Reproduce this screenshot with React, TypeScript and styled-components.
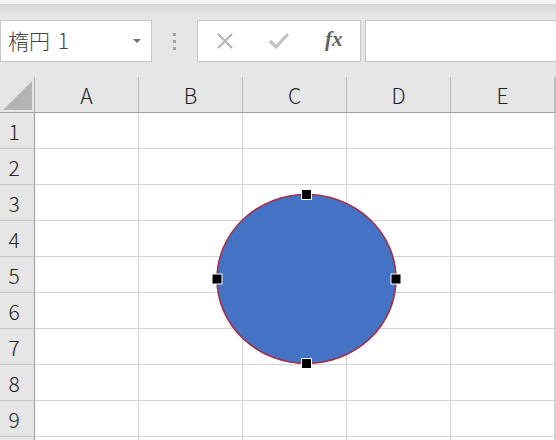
import React from "react";
import styled, { createGlobalStyle } from "styled-components";

const GlobalStyle = createGlobalStyle`
  html, body {
    margin: 0;
    padding: 0;
    background: #e6e6e6;
    overflow: hidden;
  }
  body {
    font-family: "Noto Sans CJK JP", "Noto Sans", sans-serif;
  }
`;

const columns = ["A", "B", "C", "D", "E"];
const rows = [1, 2, 3, 4, 5, 6, 7, 8, 9];

const Page = styled.div`
  width: 556px;
  height: 440px;
  overflow: hidden;
  background: #e6e6e6;
`;

const TopStrip = styled.div`
  height: 4px;
  background: #f3f2f1;
`;

const Shade = styled.div`
  height: 16px;
  background: linear-gradient(#d6d6d6, #e6e6e6 70%);
`;

const FormulaBar = styled.div`
  display: flex;
  align-items: stretch;
  height: 42px;
`;

const NameBox = styled.div`
  box-sizing: border-box;
  width: 152px;
  display: flex;
  align-items: center;
  justify-content: space-between;
  padding: 0 10px 2px 7px;
  background: #fff;
  border: 1px solid #c6c6c6;
  font-size: 21px;
  font-weight: 300;
  color: #444;
  word-spacing: 3px;
`;

const Caret = styled.span`
  width: 0;
  height: 0;
  border-left: 4px solid transparent;
  border-right: 4px solid transparent;
  border-top: 4px solid #707070;
  margin-top: 2px;
`;

const Dots = styled.div`
  width: 45px;
  display: flex;
  flex-direction: column;
  align-items: center;
  justify-content: center;
  gap: 4px;
  span {
    width: 3px;
    height: 3px;
    background: #a3a3a3;
  }
`;

const ButtonBox = styled.div`
  box-sizing: border-box;
  width: 164px;
  display: flex;
  align-items: center;
  padding-left: 17px;
  gap: 33px;
  background: #fff;
  border: 1px solid #c6c6c6;
`;

const Fx = styled.span`
  font-family: "Liberation Serif", "DejaVu Serif", serif;
  font-style: italic;
  font-weight: bold;
  font-size: 21px;
  color: #606060;
  margin-left: 2px;
  margin-top: -4px;
`;

const InputBox = styled.div`
  flex: 1;
  margin-left: 4px;
  background: #fff;
  border: 1px solid #c6c6c6;
  border-right: none;
`;

const Gap = styled.div`
  height: 15px;
`;

const Sheet = styled.div`
  position: relative;
  display: grid;
  grid-template-columns: 35px repeat(5, 104px) 1fr;
  grid-auto-rows: 36px;
`;

const Corner = styled.div`
  box-sizing: border-box;
  background: #e6e6e6;
  border-right: 1px solid #ababab;
  border-bottom: 1px solid #9e9e9e;
  display: flex;
  align-items: flex-end;
  justify-content: flex-end;
  padding: 0 2px 2px 0;
`;

const ColHead = styled.div`
  box-sizing: border-box;
  background: #e6e6e6;
  border-right: 1px solid #bcbcbc;
  border-bottom: 1px solid #9e9e9e;
  display: flex;
  align-items: center;
  justify-content: center;
  font-size: 21px;
  font-weight: 300;
  color: #222;
  padding-top: 1px;
`;

const RowHead = styled.div`
  box-sizing: border-box;
  background: #e6e6e6;
  border-right: 1px solid #9e9e9e;
  border-bottom: 1px solid #c4c4c4;
  display: flex;
  align-items: center;
  justify-content: center;
  padding-right: 6px;
  font-size: 21px;
  font-weight: 300;
  color: #222;
`;

const Cell = styled.div`
  box-sizing: border-box;
  background: #fff;
  border-right: 1px solid #d4d4d4;
  border-bottom: 1px solid #d4d4d4;
`;

const Shape = styled.svg`
  position: absolute;
  left: 207px;
  top: 112px;
`;

const Handle = ({ x, y }: { x: number; y: number }) => (
  <rect x={x - 5} y={y - 5} width={10} height={10} fill="#000" stroke="#fff" strokeWidth={1} />
);

export default function App() {
  return (
    <Page>
      <GlobalStyle />
      <TopStrip />
      <Shade />
      <FormulaBar>
        <NameBox>
          <span>楕円 1</span>
          <Caret />
        </NameBox>
        <Dots>
          <span />
          <span />
          <span />
        </Dots>
        <ButtonBox>
          <svg width="20" height="20" viewBox="0 0 20 20">
            <path d="M3 3 L17 17 M17 3 L3 17" stroke="#b4b4b4" strokeWidth="2" fill="none" />
          </svg>
          <svg width="22" height="20" viewBox="0 0 22 20">
            <path d="M2 10 L8 16 L20 3" stroke="#c2c2c2" strokeWidth="3.2" fill="none" />
          </svg>
          <Fx>fx</Fx>
        </ButtonBox>
        <InputBox />
      </FormulaBar>
      <Gap />
      <Sheet>
        <Corner>
          <svg width="29" height="29" viewBox="0 0 29 29">
            <polygon points="29,0 29,29 0,29" fill="#b4b4b4" />
          </svg>
        </Corner>
        {columns.map((c) => (
          <ColHead key={c}>{c}</ColHead>
        ))}
        <ColHead />
        {rows.map((r) => (
          <React.Fragment key={r}>
            <RowHead>{r}</RowHead>
            {columns.map((c) => (
              <Cell key={c} />
            ))}
            <Cell />
          </React.Fragment>
        ))}
        <RowHead />
        {columns.map((c) => (
          <Cell key={c} />
        ))}
        <Cell />
        <Shape width="200" height="185" viewBox="0 0 200 185">
          <ellipse cx="99.5" cy="90" rx="89.5" ry="84.5" fill="#4472c4" stroke="#a3324a" strokeWidth="1.6" />
          <Handle x={99.5} y={5.5} />
          <Handle x={99.5} y={174.5} />
          <Handle x={10} y={90} />
          <Handle x={189} y={90} />
        </Shape>
      </Sheet>
    </Page>
  );
}
